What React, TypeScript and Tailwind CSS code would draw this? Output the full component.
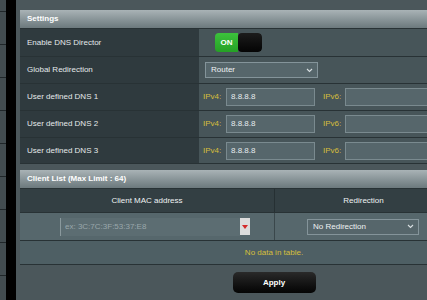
import React from "react";

const font = { fontFamily: '"Liberation Sans", Arial, sans-serif' };

function Chevron() {
  return (
    <svg width="7" height="5" viewBox="0 0 7 5" className="shrink-0">
      <path d="M1 1 L3.5 3.5 L6 1" fill="none" stroke="#d8dfe1" strokeWidth="1.1" />
    </svg>
  );
}

function Select({ label, w }: { label: string; w: string }) {
  return (
    <div className={`${w} h-[16px] flex items-center justify-between pl-[5px] pr-[4px] bg-[#56666b] border border-[#84949a] text-[8px] text-[#eef2f3]`}>
      <span>{label}</span>
      <Chevron />
    </div>
  );
}

function DnsRow({ n, last }: { n: number; last?: boolean }) {
  return (
    <div className={`flex h-[27px] border-t border-[#283235] ${last ? "border-b" : ""}`}>
      <div className="w-[179px] shrink-0 bg-[#2f3a3e] flex items-center pl-[7px] text-[8px] text-[#e4e9ea]">
        User defined DNS {n}
      </div>
      <div className="flex-1 bg-[#475559] flex items-center pl-[4px]">
        <span className="text-[8px] text-[#d6bf3c] w-[23px]">IPv4:</span>
        <div className="w-[89px] h-[18px] bg-[#56666b] border border-[#7a8a8f] flex items-center pl-[4px] text-[8px] text-[#e6ecee]">
          8.8.8.8
        </div>
        <span className="text-[8px] text-[#d6bf3c] ml-[8px] w-[22px]">IPv6:</span>
        <div className="w-[100px] h-[18px] bg-[#56666b] border border-[#7a8a8f]" />
      </div>
    </div>
  );
}

function Header({ text }: { text: string }) {
  return (
    <div className="h-[18px] flex items-center pl-[7px] bg-gradient-to-b from-[#a9b3b6] to-[#6c797d] text-[8px] font-bold text-white">
      {text}
    </div>
  );
}

export default function App() {
  return (
    <div className="w-[427px] h-[300px] overflow-hidden bg-[#4b575b] flex" style={font}>
      <div className="w-[6px] shrink-0 bg-[#424c50] flex flex-col pt-[11px]">
        {Array.from({ length: 9 }).map((_, i) => (
          <div key={i} className="h-[33px] shrink-0 border-t border-[#1f2629]" />
        ))}
      </div>
      <div className="w-[10px] shrink-0 bg-black" />
      <div className="w-[508px] shrink-0 ml-[4px] pt-[10px] flex flex-col">
        <Header text="Settings" />
        <div className="flex h-[28px] border-t border-[#283235]">
          <div className="w-[179px] shrink-0 bg-[#2f3a3e] flex items-center pl-[7px] text-[8px] text-[#e4e9ea]">
            Enable DNS Director
          </div>
          <div className="flex-1 bg-[#475559] flex items-center pl-[16px]">
            <div className="flex h-[19px] w-[47px] rounded-[4px] overflow-hidden">
              <div className="w-[23px] bg-gradient-to-b from-[#3cc23c] to-[#25a125] flex items-center justify-center text-[8px] font-bold text-white">
                ON
              </div>
              <div className="flex-1 bg-gradient-to-b from-[#1c1c1c] to-[#050505] rounded-[4px]" />
            </div>
          </div>
        </div>
        <div className="flex h-[27px] border-t border-[#283235]">
          <div className="w-[179px] shrink-0 bg-[#2f3a3e] flex items-center pl-[7px] text-[8px] text-[#e4e9ea]">
            Global Redirection
          </div>
          <div className="flex-1 bg-[#475559] flex items-center pl-[6px]">
            <Select label="Router" w="w-[113px]" />
          </div>
        </div>
        <DnsRow n={1} />
        <DnsRow n={2} />
        <DnsRow n={3} last />

        <div className="mt-[6px]">
          <Header text="Client List (Max Limit : 64)" />
        </div>
        <div className="flex h-[24px] bg-[#333f43] border-t border-[#283235] text-[8px] text-[#eef2f3]">
          <div className="w-[255px] shrink-0 flex items-center justify-center border-r border-[#263033]">
            Client MAC address
          </div>
          <div className="w-[178px] shrink-0 flex items-center justify-center border-r border-[#263033]">
            Redirection
          </div>
          <div className="flex-1" />
        </div>
        <div className="flex h-[28px] bg-[#56676c] border-t border-[#283235]">
          <div className="w-[255px] shrink-0 flex items-center pl-[40px] border-r border-[#3a474b]">
            <div className="w-[180px] h-[18px] bg-[#5c6d72] border-l border-[#8a999d] flex items-center pl-[4px] text-[8px] text-[#9aa7ab]">
              ex: 3C:7C:3F:53:37:E8
            </div>
            <div className="w-[10px] h-[17px] bg-[#dcdcdc] flex items-center justify-center">
              <svg width="6" height="4" viewBox="0 0 6 4">
                <path d="M0 0 L6 0 L3 4 Z" fill="#d42a2a" />
              </svg>
            </div>
          </div>
          <div className="w-[178px] shrink-0 flex items-center pl-[32px] border-r border-[#3a474b]">
            <Select label="No Redirection" w="w-[112px]" />
          </div>
          <div className="flex-1" />
        </div>
        <div className="h-[25px] bg-[#4e5f64] border-t border-b border-[#283235] flex items-center justify-center text-[8px] text-[#d6bf3c]">
          No data in table.
        </div>
        <div className="flex justify-center mt-[7px]">
          <div className="w-[83px] h-[21px] rounded-[5px] bg-gradient-to-b from-[#2a2a2a] to-[#050505] flex items-center justify-center text-[8px] font-bold text-white">
            Apply
          </div>
        </div>
      </div>
    </div>
  );
}
